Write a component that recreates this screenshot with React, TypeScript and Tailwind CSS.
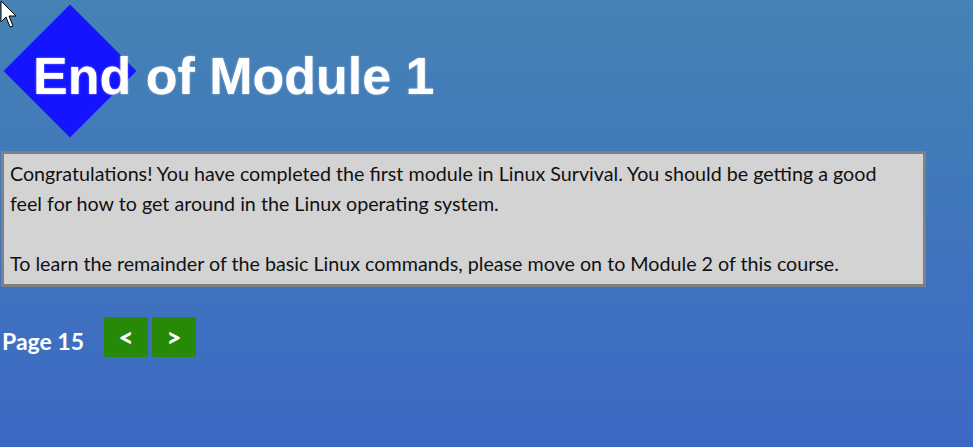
import React from 'react';

const Cursor = () => (
  <svg className="absolute left-0 top-0" width="20" height="30" viewBox="0 0 20 30">
    <path d="M1 1 L1 22 L6 17 L10 27 L13 26 L9 16 L16 16 Z" fill="#fff" stroke="#000" strokeWidth="1" />
  </svg>
);

export default function App() {
  return (
    <div className="relative h-[447px] w-[973px] overflow-hidden bg-gradient-to-b from-[#4682b4] to-[#3c68c4] font-['Lato',sans-serif]">
      <div className="relative h-[151px]">
        <div className="absolute left-[23px] top-[24px] h-[94px] w-[94px] rotate-45 bg-[#1414ff]" />
        <h1 className="relative pl-[33px] pt-[46px] font-['Liberation_Sans',Arial,sans-serif] text-[52px] font-bold leading-[60px] text-white [text-shadow:0_0_2px_rgba(255,255,255,0.6)]">
          End of Module 1
        </h1>
      </div>
      <div className="ml-[1px] w-[925px] border-[3px] border-[#808080] bg-[#d3d3d3] py-[5px] pl-[6px] pr-[20px] text-[19.7px] leading-[30px] text-[#111]">
        <p>
          Congratulations! You have completed the first module in Linux Survival. You should be getting a good feel for how to get around in the Linux operating system.
        </p>
        <p className="mt-[30px]">To learn the remainder of the basic Linux commands, please move on to Module 2 of this course.</p>
      </div>
      <div className="mt-[29px] flex items-center pl-[2px]">
        <span className="mt-[8px] text-[23px] font-bold text-white">Page 15</span>
        <div className="ml-[20px] flex gap-[4px]">
          <button className="flex h-[40px] w-[44px] items-center justify-center rounded-[2px] bg-[#268a08] text-[26px] font-black text-white">&lt;</button>
          <button className="flex h-[40px] w-[44px] items-center justify-center rounded-[2px] bg-[#268a08] text-[26px] font-black text-white">&gt;</button>
        </div>
      </div>
      <Cursor />
    </div>
  );
}
